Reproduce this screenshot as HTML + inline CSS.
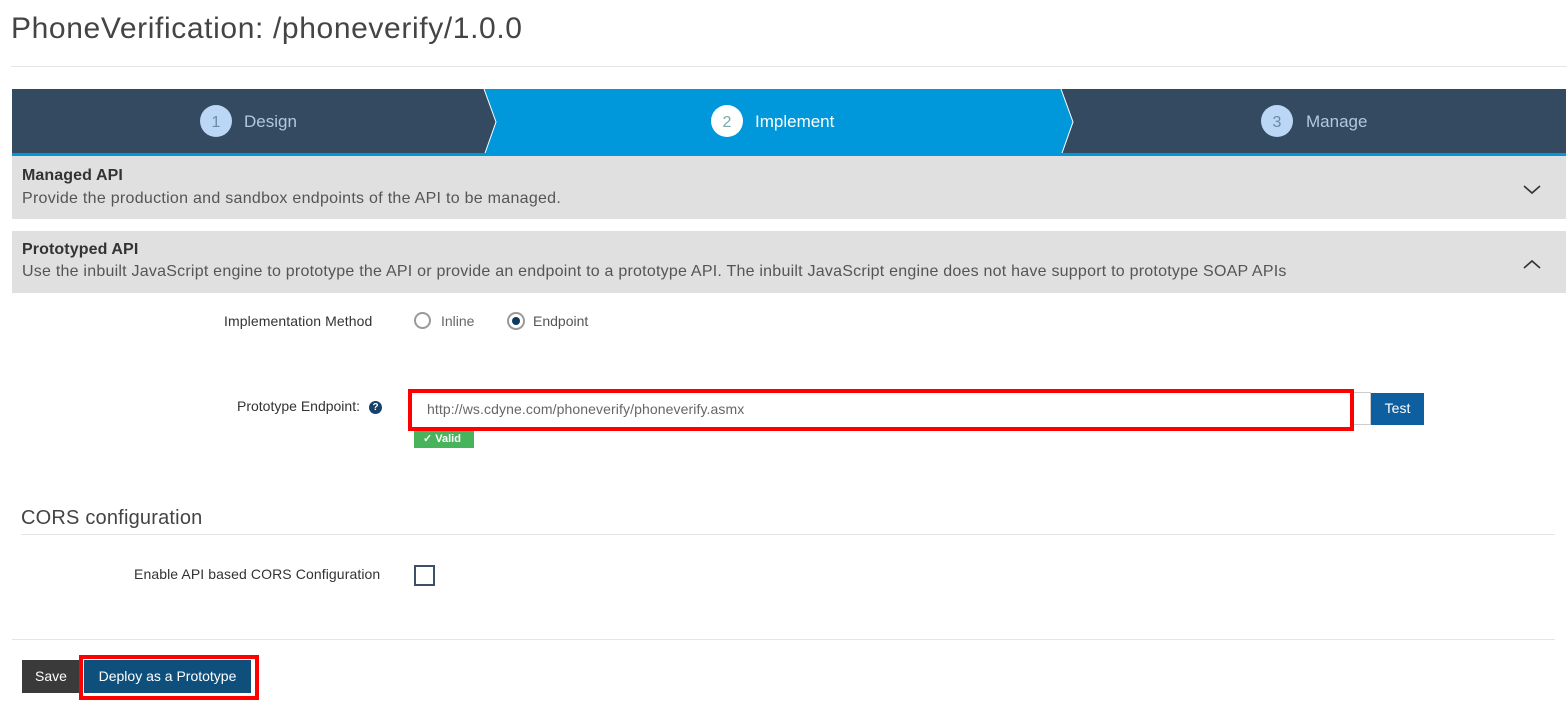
<!DOCTYPE html>
<html><head><style>
body{margin:0;background:#fff;font-family:"Liberation Sans",sans-serif;color:#333;width:1568px;height:725px;position:relative;overflow:hidden}
.a{position:absolute}
.t{font-size:14px;color:#333}
</style></head><body>
<div class="a" style="left:11px;top:12px;font-size:30px;color:#444;letter-spacing:0.62px">PhoneVerification: /phoneverify/1.0.0</div>
<div class="a" style="left:11px;top:66px;width:1556px;height:1px;background:#e5e5e5"></div>

<svg class="a" style="left:12px;top:89px" width="1554" height="67">
<rect x="0" y="0" width="1554" height="67" fill="#334a60"/>
<polygon points="472,0 1049,0 1061,33 1049,67 472,67 484,33" fill="#0098da"/>
<polyline points="472,0 484,33 472,67" fill="none" stroke="#fff" stroke-width="1"/>
<polyline points="1049,0 1061,33 1049,67" fill="none" stroke="#fff" stroke-width="1"/>
<rect x="0" y="64" width="1554" height="3" fill="#0098da"/>
<circle cx="204" cy="32" r="16" fill="#bcd6f5"/>
<text x="204" y="38" text-anchor="middle" font-family="Liberation Sans" font-size="16" fill="#6b8aaa">1</text>
<text x="232" y="38" font-family="Liberation Sans" font-size="17" fill="#b4c8dc">Design</text>
<circle cx="715" cy="32" r="16" fill="#fff"/>
<text x="715" y="38" text-anchor="middle" font-family="Liberation Sans" font-size="16" fill="#7aa">2</text>
<text x="743" y="38" font-family="Liberation Sans" font-size="17" fill="#fff">Implement</text>
<circle cx="1265" cy="32" r="16" fill="#bcd6f5"/>
<text x="1265" y="38" text-anchor="middle" font-family="Liberation Sans" font-size="16" fill="#6b8aaa">3</text>
<text x="1294" y="38" font-family="Liberation Sans" font-size="17" fill="#b4c8dc">Manage</text>
</svg>

<div class="a" style="left:12px;top:156px;width:1554px;height:63px;background:#e0e0e0"></div>
<div class="a" style="left:22px;top:167px;font-size:16px;font-weight:bold;color:#333;letter-spacing:0.1px">Managed API</div>
<div class="a" style="left:22px;top:190px;font-size:16px;color:#555;letter-spacing:0.28px">Provide the production and sandbox endpoints of the API to be managed.</div>
<svg class="a" style="left:1522px;top:184px" width="20" height="12"><polyline points="2,2 10,9 18,2" fill="none" stroke="#333" stroke-width="1.6"/></svg>

<div class="a" style="left:12px;top:231px;width:1554px;height:62px;background:#e0e0e0"></div>
<div class="a" style="left:22px;top:241px;font-size:16px;font-weight:bold;color:#333;letter-spacing:0.1px">Prototyped API</div>
<div class="a" style="left:22px;top:263px;font-size:16px;color:#555;letter-spacing:0.23px">Use the inbuilt JavaScript engine to prototype the API or provide an endpoint to a prototype API. The inbuilt JavaScript engine does not have support to prototype SOAP APIs</div>
<svg class="a" style="left:1522px;top:258px" width="20" height="12"><polyline points="2,10 10,3 18,10" fill="none" stroke="#333" stroke-width="1.6"/></svg>

<div class="a t" style="left:224px;top:313px;letter-spacing:0.1px">Implementation Method</div>
<div class="a" style="left:414px;top:312px;width:17px;height:17px;border:2px solid #999;border-radius:50%;box-sizing:border-box"></div>
<div class="a t" style="left:441px;top:313px;color:#666">Inline</div>
<div class="a" style="left:507px;top:312px;width:18px;height:18px;border:2px solid #999;border-radius:50%;box-sizing:border-box"></div>
<div class="a" style="left:512px;top:317px;width:8px;height:8px;background:#0e3a5e;border-radius:50%"></div>
<div class="a t" style="left:533px;top:313px;color:#555">Endpoint</div>

<div class="a t" style="left:237px;top:398px">Prototype Endpoint:</div>
<div class="a" style="left:369px;top:401px;width:13px;height:13px;border-radius:50%;background:#17406a;color:#fff;font-size:10px;font-weight:bold;text-align:center;line-height:13px">?</div>
<div class="a" style="left:408px;top:389px;width:946px;height:42px;border:4px solid #f00;box-sizing:border-box"></div>
<div class="a" style="left:1354px;top:392px;width:17px;height:33px;border:1px solid #ccc;border-left:none;box-sizing:border-box"></div>
<div class="a" style="left:427px;top:401px;font-size:14px;color:#666;letter-spacing:0.1px">http://ws.cdyne.com/phoneverify/phoneverify.asmx</div>
<div class="a" style="left:1371px;top:393px;width:53px;height:32px;background:#0e5fa0;color:#fff;font-size:14px;text-align:center;line-height:31px">Test</div>
<div class="a" style="left:414px;top:431px;width:60px;height:17px;background:#47b45c;color:#fff;font-size:11px;font-weight:bold;line-height:17px;padding-left:9px;box-sizing:border-box">✓ Valid</div>

<div class="a" style="left:21px;top:507px;font-size:20px;color:#444;letter-spacing:0.2px">CORS configuration</div>
<div class="a" style="left:21px;top:534px;width:1534px;height:1px;background:#e5e5e5"></div>
<div class="a t" style="left:134px;top:566px;letter-spacing:0.1px">Enable API based CORS Configuration</div>
<div class="a" style="left:414px;top:565px;width:21px;height:21px;border:2px solid #3c5068;box-sizing:border-box"></div>

<div class="a" style="left:12px;top:639px;width:1543px;height:1px;background:#e5e5e5"></div>
<div class="a" style="left:22px;top:660px;width:58px;height:33px;background:#3a3a3a;color:#fff;font-size:14px;text-align:center;line-height:33px">Save</div>
<div class="a" style="left:79px;top:655px;width:180px;height:45px;border:4px solid #f00;box-sizing:border-box"></div>
<div class="a" style="left:84px;top:660px;width:167px;height:33px;background:#0f4f7c;color:#fff;font-size:14px;text-align:center;line-height:33px">Deploy as a Prototype</div>
</body></html>
